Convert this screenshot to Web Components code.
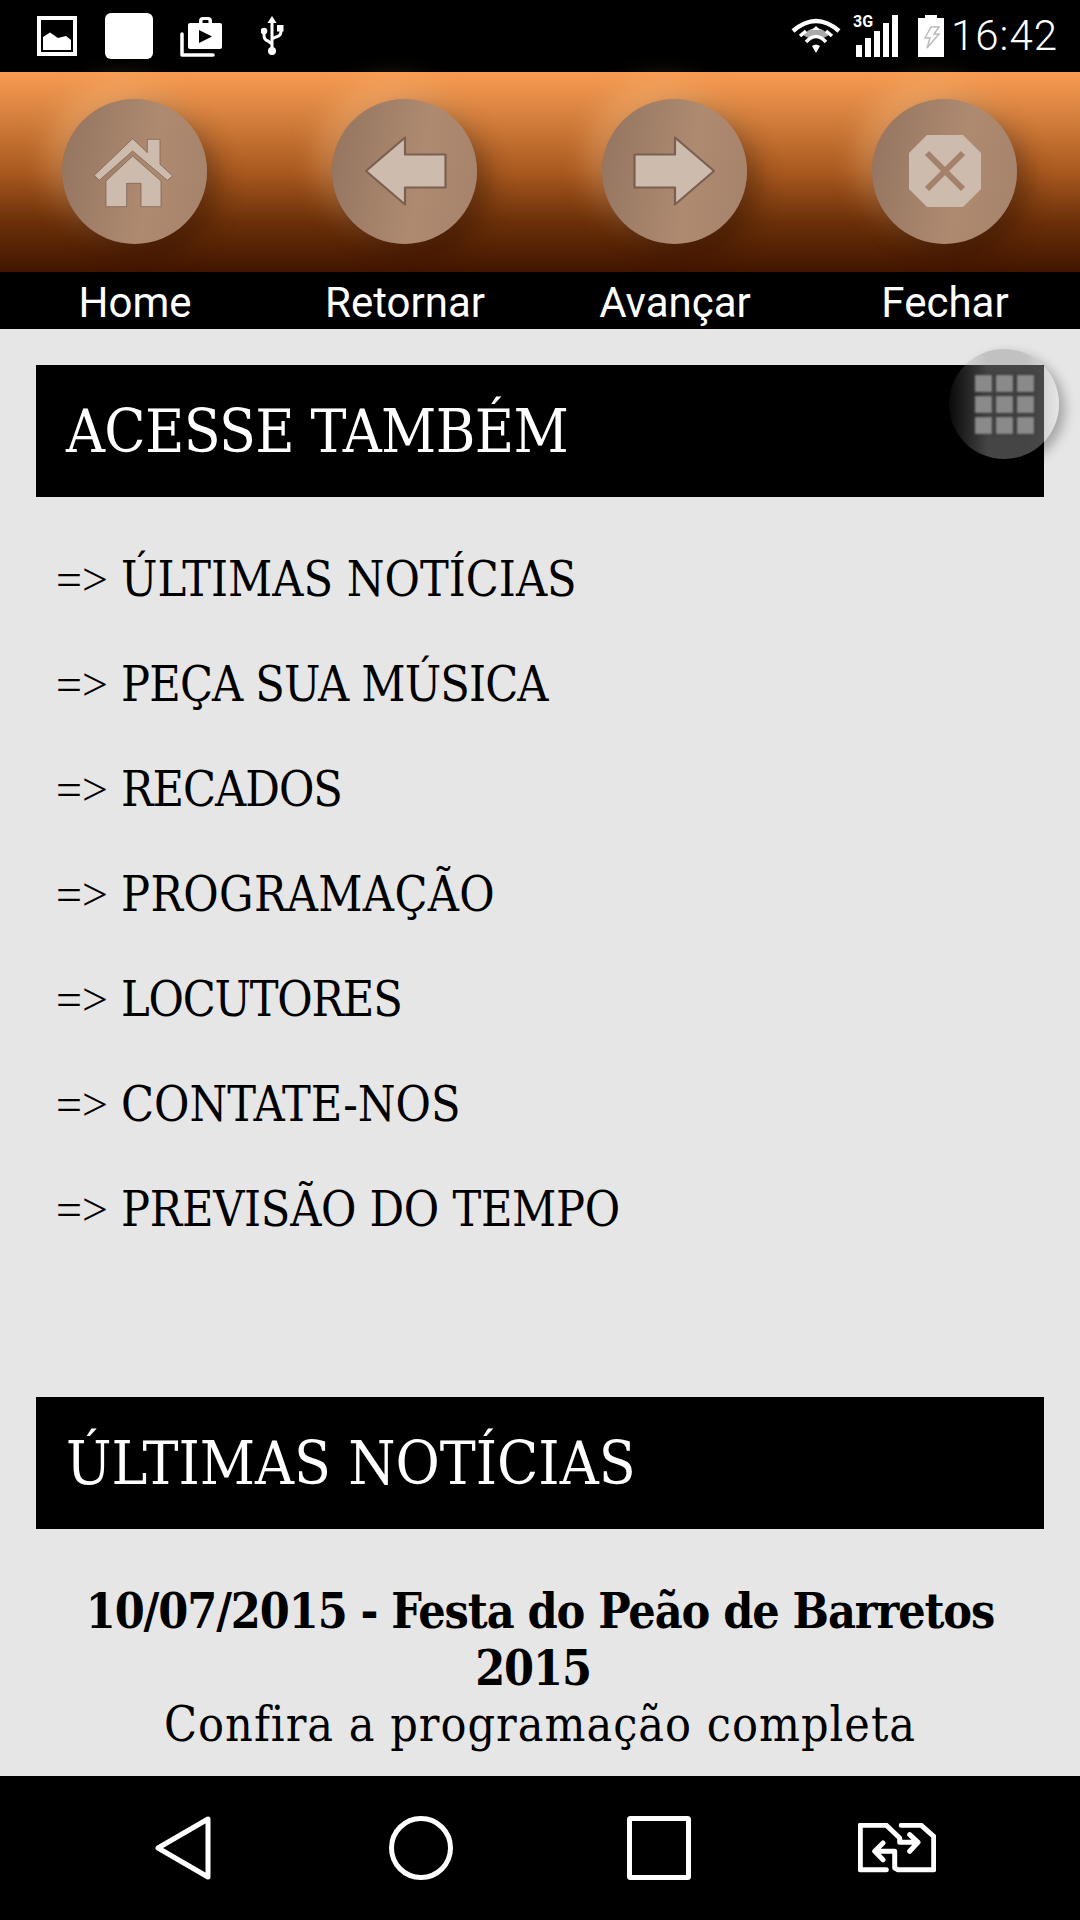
<!doctype html>
<html>
<head>
<meta charset="utf-8">
<style>
	html, body { margin: 0; padding: 0; background: #e6e6e6; }
	body { width: 1080px; height: 1920px; overflow: hidden; display: flex; flex-direction: column; position: relative; }
</style>
</head>
<body>
<status-bar></status-bar>
<nav-header>
	<nav-button label="Home" icon="home"></nav-button>
	<nav-button label="Retornar" icon="back"></nav-button>
	<nav-button label="Avançar" icon="forward"></nav-button>
	<nav-button label="Fechar" icon="close"></nav-button>
</nav-header>
<page-content>
	<section-title style="margin-top:36px;letter-spacing:-.65px">ACESSE TAMBÉM</section-title>
	<link-list>
		<link-item>ÚLTIMAS NOTÍCIAS</link-item>
		<link-item style="letter-spacing:-.85px">PEÇA SUA MÚSICA</link-item>
		<link-item style="letter-spacing:-1px">RECADOS</link-item>
		<link-item style="letter-spacing:.35px">PROGRAMAÇÃO</link-item>
		<link-item style="letter-spacing:-1.2px">LOCUTORES</link-item>
		<link-item>CONTATE-NOS</link-item>
		<link-item style="letter-spacing:-.3px">PREVISÃO DO TEMPO</link-item>
	</link-list>
	<section-title style="margin-top:135px">ÚLTIMAS NOTÍCIAS</section-title>
	<news-item>
		<span slot="title">10/07/2015 - Festa do Peão de Barretos 2015&nbsp;</span>
		Confira a programação completa
	</news-item>
</page-content>
<grid-fab></grid-fab>
<soft-keys></soft-keys>

<script>
const SERIF = `"DejaVu Serif Condensed", "Liberation Serif", serif`;

class StatusBar extends HTMLElement {
	constructor() {
		super();
		this.attachShadow({ mode: "open" });
		this.shadowRoot.innerHTML = `
			<style>
				:host { display: flex; flex: none; height: 72px; background: #000; align-items: center; padding: 0 22px 0 37px; color: #fff; }
				svg { display: block; flex: none; }
				.left { display: flex; align-items: center; }
				.right { margin-left: auto; display: flex; align-items: center; }
				.sig { position: relative; width: 42px; height: 42px; margin-left: 15px; }
				.sig span { position: absolute; left: -3px; top: -1px; font: 700 16px/16px Roboto, sans-serif; }
				.sig svg { position: absolute; left: 0; top: 0; }
				.time { font: 300 42px/72px Roboto, sans-serif; letter-spacing: 1px; margin-left: 7px; color: #fff; }
			</style>
			<div class="left">
				<svg width="40" height="40" viewBox="0 0 40 40"><path fill="#fff" fill-rule="evenodd" d="M0 0H40V40H0ZM4 4V36H36V4Z"/><path fill="#fff" d="M6 34V21L13 16.500L21 22L29 20L34 24V34Z"/></svg>
				<svg width="48" height="46" viewBox="0 0 48 46" style="margin-left:28px"><rect width="48" height="46" rx="6" fill="#fff"/></svg>
				<svg width="42" height="40" viewBox="0 0 42 40" style="margin-left:27px;margin-top:2px"><path fill="none" stroke="#fff" stroke-width="3.500" stroke-linejoin="round" stroke-linecap="round" d="M2 17V38H33"/><path fill="#fff" fill-rule="evenodd" d="M8 8Q8 6 10 6H19V4Q19 0 23 0H28Q32 0 32 4V6H40Q42 6 42 8V30Q42 32 40 32H10Q8 32 8 30ZM22.500 6H28.500V4Q28.500 3 27.500 3H23.500Q22.500 3 22.500 4ZM19 13V26L32 19.500Z"/></svg>
				<svg width="23" height="40" viewBox="0 0 23 40" style="margin-left:39px"><path fill="none" stroke="#fff" stroke-width="3" d="M11 5V34M3 15V19Q3 24 7 25L11 28M20 11V15Q20 20 15 21L11 23"/><path fill="#fff" d="M11 0L15.500 7H6.500Z"/><circle cx="11" cy="35" r="4" fill="#fff"/><circle cx="3" cy="15" r="3.300" fill="#fff"/><rect x="16" y="9" width="6.500" height="6.500" fill="#fff"/></svg>
			</div>
			<div class="right">
				<svg width="50" height="36" viewBox="0 0 50 36"><path fill="none" stroke="#fff" stroke-width="4.500" d="M2 13Q25 -7 48 13"/><path fill="#aaa" d="M12 17Q25 3 38 17L31 21Q25 15 19 21Z"/><path fill="none" stroke="#fff" stroke-width="3.500" d="M9 18L15 13M41 18L35 13M15 24Q25 13 35 24"/><path fill="#fff" d="M25 8L29 12H21Z"/><path fill="#fff" d="M21 28Q25 25 29 28L25 35Z"/></svg>
				<div class="sig">
					<span>3G</span>
					<svg width="42" height="42" viewBox="0 0 42 42"><path fill="#fff" d="M0 30H6V42H0ZM9 23H15V42H9ZM18 16H24V42H18ZM27 8H33V42H27ZM36 0H42V42H36Z"/></svg>
				</div>
				<svg width="26" height="42" viewBox="0 0 26 42" style="margin-left:20px"><path fill="#fff" d="M7 0H19V3H26V42H0V3H7Z"/><path fill="none" stroke="#bbb" stroke-width="1.500" d="M13 12H21L16 19H21L9 33L12 23H7Z"/></svg>
				<div class="time">16:42</div>
			</div>
		`;
	}
}
customElements.define("status-bar", StatusBar);

class NavHeader extends HTMLElement {
	constructor() {
		super();
		this.attachShadow({ mode: "open" });
		this.shadowRoot.innerHTML = `
			<style>
				:host {
					display: grid; flex: none; grid-template-columns: repeat(4, 270px); height: 257px;
					background: linear-gradient(#000 0, #000 0) bottom / 100% 57px no-repeat,
						linear-gradient(#f79b52 0, #e18a45 15%, #a9591f 50%, #6b3009 75%, #421500 100%) top / 100% 200px no-repeat;
				}
			</style>
			<slot></slot>
		`;
	}
}
customElements.define("nav-header", NavHeader);

// home is drawn at 3x, the arrows and the stop sign on an 80 box centred in the circle
const NAV_ICONS = {
	home: `<svg width="150" height="150" viewBox="0 0 450 450" stroke-width="7">
		<path d="M218 128L262 170V130H300V205L338 240L322 253L218 165L118 253L103 238Z"/>
		<path d="M218 180L303 255V332H243V262H200V332H138V255Z"/></svg>`,
	back: `<svg width="84" height="84" viewBox="-2 -2 84 84"><path d="M1 40L40 6.500V23.500H80.500V56.500H40V73.500Z"/></svg>`,
	forward: `<svg width="84" height="84" viewBox="-2 -2 84 84"><path d="M79 40L40 6.500V23.500H-.5V56.500H40V73.500Z"/></svg>`,
	close: `<svg width="84" height="84" viewBox="-2 -2 84 84"><path d="M22 4H58L76 22V58L58 76H22L4 58V22Z" style="stroke:none"/><path d="M22 22L58 58M58 22L22 58" style="fill:none;stroke:#a5806a;stroke-width:6"/></svg>`,
};

class NavButton extends HTMLElement {
	constructor() {
		super();
		this.attachShadow({ mode: "open" });
		const icon = this.getAttribute("icon");
		this.shadowRoot.innerHTML = `
			<style>
				:host { display: flex; flex-direction: column; align-items: center; }
				.face { width: 200px; height: 200px; display: flex; align-items: center; justify-content: center; flex: none; }
				.circle {
					width: 145px; height: 145px; border-radius: 50%; margin: 0 1px 2px 0; flex: none;
					display: flex; align-items: center; justify-content: center;
					background: linear-gradient(100deg, #937460, #ae8a70 60%, #a5826b);
					box-shadow: 10px 11px 26px rgba(40,15,0,.45), -12px -14px 30px rgba(255,205,150,.36);
				}
				svg { display: block; flex: none; fill: #cdbcae; stroke: #7b5f50; stroke-width: 2.200; stroke-linejoin: round; }
				.label { font: 400 42px/61px Roboto, sans-serif; color: #fff; height: 57px; }
			</style>
			<div class="face"><div class="circle">${NAV_ICONS[icon]}</div></div>
			<div class="label">${this.getAttribute("label")}</div>
		`;
	}
}
customElements.define("nav-button", NavButton);

class PageContent extends HTMLElement {
	constructor() {
		super();
		this.attachShadow({ mode: "open" });
		this.shadowRoot.innerHTML = `
			<style>
				:host { display: flex; flex-direction: column; flex: 1; min-height: 0; overflow: hidden; padding: 0 36px; background: #e6e6e6; }
			</style>
			<slot></slot>
		`;
	}
}
customElements.define("page-content", PageContent);

class SectionTitle extends HTMLElement {
	constructor() {
		super();
		this.attachShadow({ mode: "open" });
		this.shadowRoot.innerHTML = `
			<style>
				:host { display: flex; flex: none; align-items: center; height: 132px; padding-left: 30px; background: #000; color: #fff; font: 400 60px/132px ${SERIF}; }
			</style>
			<slot></slot>
		`;
	}
}
customElements.define("section-title", SectionTitle);

class LinkList extends HTMLElement {
	constructor() {
		super();
		this.attachShadow({ mode: "open" });
		this.shadowRoot.innerHTML = `
			<style>
				:host { display: flex; flex-direction: column; flex: none; padding: 30px 0 0 20px; }
			</style>
			<slot></slot>
		`;
	}
}
customElements.define("link-list", LinkList);

class LinkItem extends HTMLElement {
	constructor() {
		super();
		this.attachShadow({ mode: "open" });
		this.shadowRoot.innerHTML = `
			<style>
				:host { display: flex; height: 105px; font: 400 48px/105px ${SERIF}; color: #000; white-space: nowrap; }
				.arrow { flex: none; width: 65px; letter-spacing: 0; font: 400 46px/105px "Liberation Serif", serif; }
			</style>
			<span class="arrow">=&gt;</span><span><slot></slot></span>
		`;
	}
}
customElements.define("link-item", LinkItem);

class NewsItem extends HTMLElement {
	constructor() {
		super();
		this.attachShadow({ mode: "open" });
		this.shadowRoot.innerHTML = `
			<style>
				:host { display: block; flex: none; margin-top: 54px; text-align: center; font: 400 48px/57px ${SERIF}; color: #000; letter-spacing: 1px; }
				.title { font-weight: 700; letter-spacing: -1.1px; }
			</style>
			<div class="title"><slot name="title"></slot></div>
			<div style="margin-top:-1px"><slot></slot></div>
		`;
	}
}
customElements.define("news-item", NewsItem);

class GridFab extends HTMLElement {
	constructor() {
		super();
		this.attachShadow({ mode: "open" });
		this.shadowRoot.innerHTML = `
			<style>
				:host {
					position: absolute; left: 949px; top: 349px; width: 110px; height: 110px; border-radius: 50%;
					background: linear-gradient(90deg, rgba(150,150,150,.06), rgba(150,150,150,.46) 35%, rgba(150,150,150,.46) 70%, rgba(230,230,230,.32) 100%);
					box-shadow: 6px 5px 12px rgba(0,0,0,.28);
					display: grid; grid-template-columns: repeat(3, 17px); grid-auto-rows: 17px; gap: 4px;
					align-content: center; justify-content: center;
				}
				i { background: #8a8a8a; box-shadow: 0 0 2px 1px rgba(40,40,40,.5); filter: blur(1px); }
			</style>
			<i></i><i></i><i></i><i></i><i></i><i></i><i></i><i></i><i></i>
		`;
	}
}
customElements.define("grid-fab", GridFab);

class SoftKeys extends HTMLElement {
	constructor() {
		super();
		this.attachShadow({ mode: "open" });
		this.shadowRoot.innerHTML = `
			<style>
				:host { display: flex; flex: none; height: 144px; background: #000; align-items: center; padding-left: 155px; box-sizing: border-box; }
				svg { display: block; flex: none; fill: none; stroke: #fff; stroke-width: 5; stroke-linejoin: round; stroke-linecap: round; }
			</style>
			<svg width="56" height="64" viewBox="0 0 56 64"><path d="M3 32L53 3V61Z"/></svg>
			<svg width="64" height="64" viewBox="0 0 64 64" style="margin-left:178px"><circle cx="32" cy="32" r="29.500"/></svg>
			<svg width="64" height="64" viewBox="0 0 64 64" style="margin-left:174px"><rect x="2.500" y="2.500" width="59" height="59" rx="1"/></svg>
			<svg width="78" height="50" viewBox="0 0 78 50" style="margin-left:167px"><path d="M28.300 46.700H2.300V2.300H28.300L41.700 15V19.300H60M51.700 11.700L60 19.300L51.700 28.300"/><path d="M43.300 2.300H63.300L75.700 13.300V46.700H40L36.700 45V28.300H18.300M25 20L16.700 28.300L25 36.700"/></svg>
		`;
	}
}
customElements.define("soft-keys", SoftKeys);
</script>
</body>
</html>
